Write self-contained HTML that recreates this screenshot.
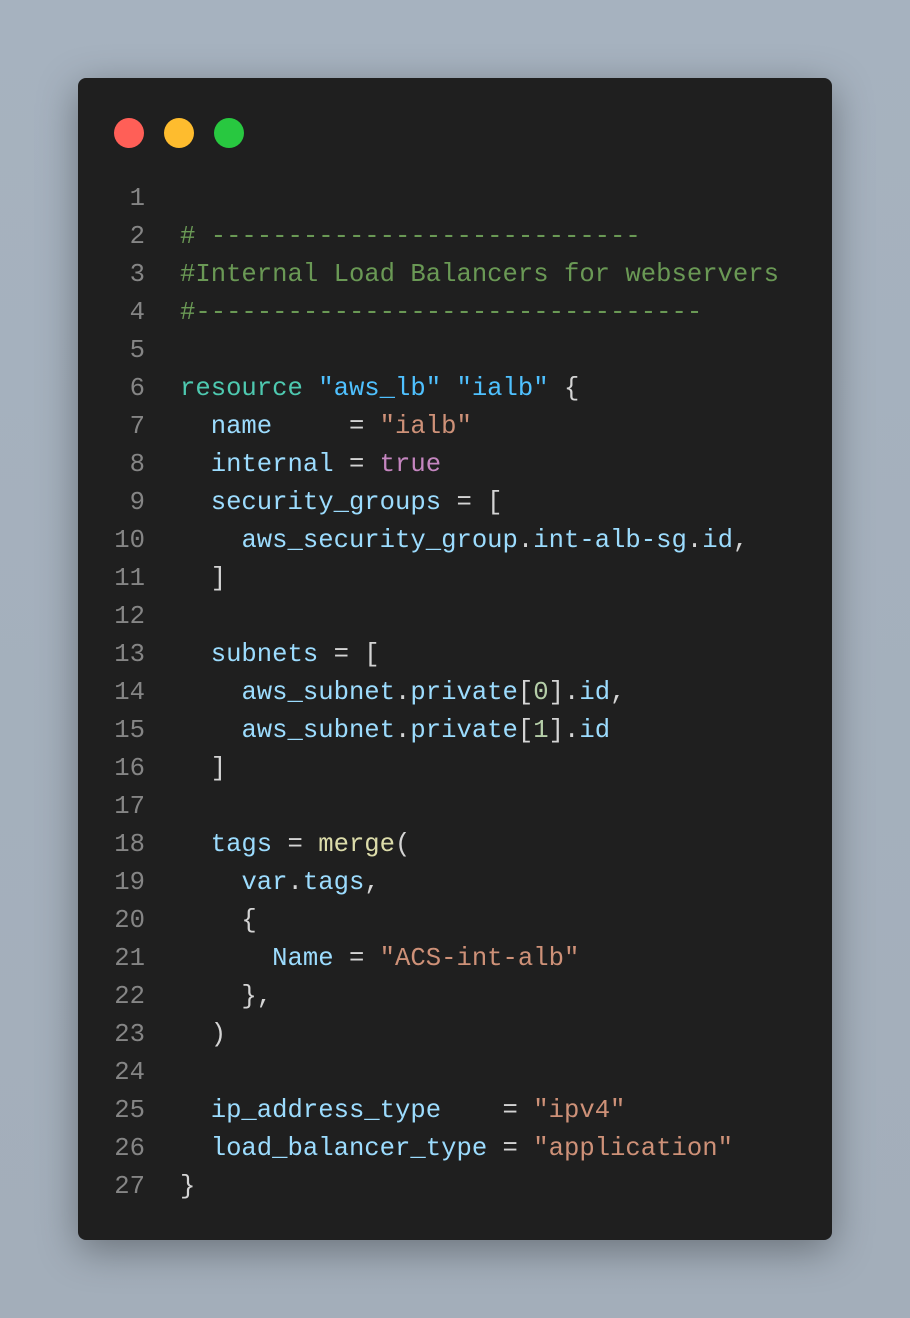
<!DOCTYPE html>
<html><head><meta charset="utf-8"><style>
html,body{margin:0;padding:0;}
body{width:910px;height:1318px;background:linear-gradient(180deg,#a6b2bf,#a3aeba);position:relative;overflow:hidden;}
.card{position:absolute;left:78px;top:78px;width:754px;height:1162px;background:#1f1f1f;border-radius:8px;box-shadow:0 10px 40px rgba(0,0,0,.35);}
.dot{position:absolute;top:118px;width:30px;height:30px;border-radius:50%;}
.code{position:absolute;left:0;top:180px;font-family:"Liberation Mono",monospace;font-size:25.6px;line-height:38px;white-space:pre;color:#d4d4d4;}
.ln{display:inline-block;width:145px;text-align:right;color:#858585;margin-right:35px;}
.c{color:#6a9955}.k{color:#4ec9b0}.s1{color:#4fc1ff}.a{color:#9cdcfe}.s{color:#ce9178}.b{color:#c586c0}.f{color:#dcdcaa}.n{color:#b5cea8}
</style></head><body>
<div class="card"></div>
<div class="dot" style="left:114px;background:#ff5f57"></div>
<div class="dot" style="left:164px;background:#febc2e"></div>
<div class="dot" style="left:214px;background:#28c840"></div>
<div class="code"><div><span class="ln">1</span></div><div><span class="ln">2</span><span class="c"># ----------------------------</span></div><div><span class="ln">3</span><span class="c">#Internal Load Balancers for webservers</span></div><div><span class="ln">4</span><span class="c">#---------------------------------</span></div><div><span class="ln">5</span></div><div><span class="ln">6</span><span class="k">resource</span> <span class="s1">"aws_lb"</span> <span class="s1">"ialb"</span> {</div><div><span class="ln">7</span>  <span class="a">name</span>     = <span class="s">"ialb"</span></div><div><span class="ln">8</span>  <span class="a">internal</span> = <span class="b">true</span></div><div><span class="ln">9</span>  <span class="a">security_groups</span> = [</div><div><span class="ln">10</span>    <span class="a">aws_security_group</span>.<span class="a">int-alb-sg</span>.<span class="a">id</span>,</div><div><span class="ln">11</span>  ]</div><div><span class="ln">12</span></div><div><span class="ln">13</span>  <span class="a">subnets</span> = [</div><div><span class="ln">14</span>    <span class="a">aws_subnet</span>.<span class="a">private</span>[<span class="n">0</span>].<span class="a">id</span>,</div><div><span class="ln">15</span>    <span class="a">aws_subnet</span>.<span class="a">private</span>[<span class="n">1</span>].<span class="a">id</span></div><div><span class="ln">16</span>  ]</div><div><span class="ln">17</span></div><div><span class="ln">18</span>  <span class="a">tags</span> = <span class="f">merge</span>(</div><div><span class="ln">19</span>    <span class="a">var</span>.<span class="a">tags</span>,</div><div><span class="ln">20</span>    {</div><div><span class="ln">21</span>      <span class="a">Name</span> = <span class="s">"ACS-int-alb"</span></div><div><span class="ln">22</span>    },</div><div><span class="ln">23</span>  )</div><div><span class="ln">24</span></div><div><span class="ln">25</span>  <span class="a">ip_address_type</span>    = <span class="s">"ipv4"</span></div><div><span class="ln">26</span>  <span class="a">load_balancer_type</span> = <span class="s">"application"</span></div><div><span class="ln">27</span>}</div></div>
</body></html>
